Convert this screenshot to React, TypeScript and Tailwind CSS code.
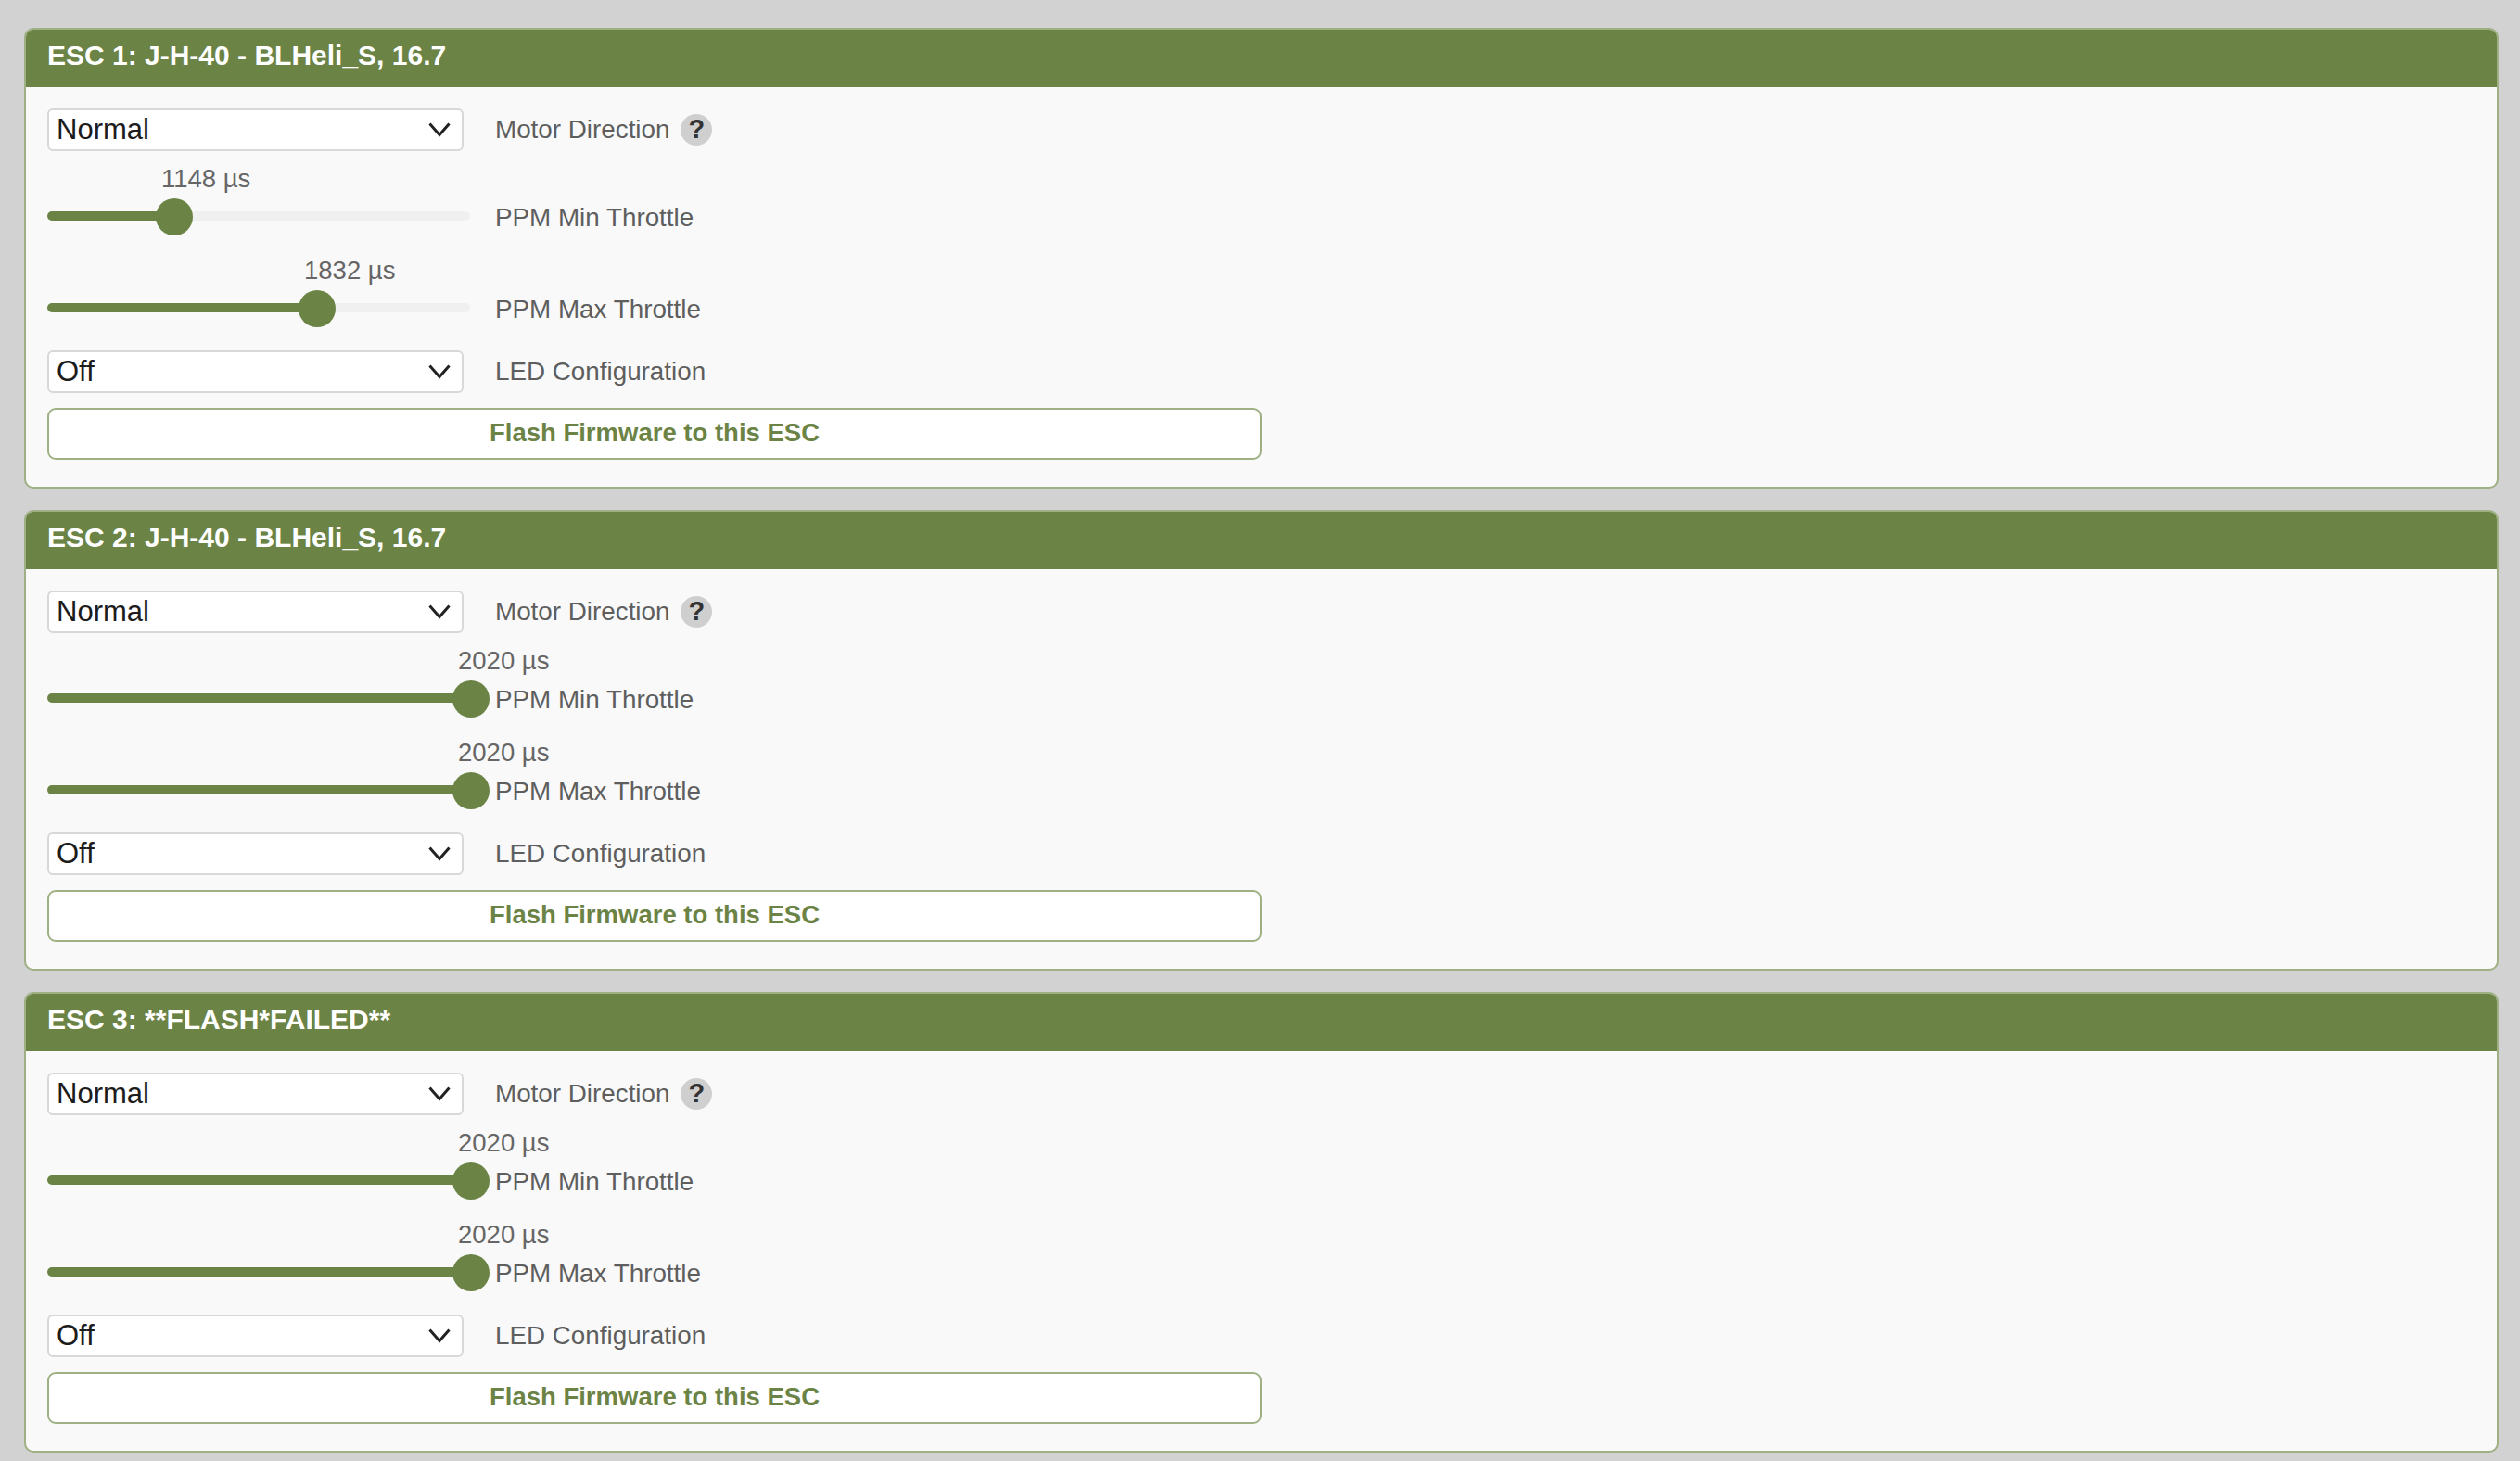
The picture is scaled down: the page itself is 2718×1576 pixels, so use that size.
import React from 'react';

interface EscProps {
  title: string;
  minValue: number;
  maxValue: number;
  minPct: number;
  maxPct: number;
}

const Chevron = () => (
  <svg className="absolute right-[14px] top-[15px] pointer-events-none" width="24" height="16" viewBox="0 0 24 16" fill="none">
    <path d="M1.5 1.5 L12 13.5 L22.5 1.5" stroke="#222222" strokeWidth="3" />
  </svg>
);

const SelectRow: React.FC<{ value: string; label: string; help?: boolean }> = ({ value, label, help }) => (
  <div className="flex items-center h-[46px]">
    <div className="relative w-[449px] h-[46px] shrink-0">
      <select
        defaultValue={value}
        className="w-full h-full appearance-none bg-white border-2 border-[#d8d8d8] rounded-[6px] pl-[8px] pb-[1px] text-[31px] leading-none text-[#1c1c1c] outline-none"
      >
        <option>{value}</option>
      </select>
      <Chevron />
    </div>
    <span className="ml-[34px] text-[27.8px] text-[#5e5e5e]">{label}</span>
    {help && (
      <span className="ml-[12px] w-[34px] h-[34px] rounded-full bg-[#cfcfcf] flex items-center justify-center text-[29px] font-bold text-[#333333]">
        ?
      </span>
    )}
  </div>
);

const SliderRow: React.FC<{ value: number; pct: number; label: string }> = ({ value, pct, label }) => (
  <div className="flex h-[99px]">
    <div className="w-[456px] shrink-0 relative">
      <div className="absolute top-[10px] left-0 right-0 h-[30px]">
        <span
          className="absolute top-0 whitespace-nowrap text-[27.5px] leading-[30px] text-[#666666]"
          style={{ left: `calc(${pct}% - 13px)` }}
        >
          {value} µs
        </span>
      </div>
      <div className="absolute top-[60px] left-0 right-0 h-[10px] rounded-full bg-[#f0f0f0]">
        <div className="h-full rounded-full bg-[#6b8345]" style={{ width: `${pct}%` }} />
        <div
          className="absolute top-[-14px] w-[40px] h-[40px] -ml-[19px] rounded-full bg-[#6b8345]"
          style={{ left: `${pct}%` }}
        />
      </div>
    </div>
    <span className="ml-[27px] mt-[51px] h-[32px] leading-[32px] text-[27.8px] text-[#5e5e5e]">{label}</span>
  </div>
);

const EscCard: React.FC<EscProps> = ({ title, minValue, maxValue, minPct, maxPct }) => (
  <div className="h-[497px] rounded-[10px] border-2 border-[#9fb184] bg-[#f9f9f9] overflow-hidden">
    <div className="h-[62px] bg-[#6b8345] pl-[23px] flex items-center text-[30px] font-bold text-white pb-[8px]">
      {title}
    </div>
    <div className="px-[23px] pt-[23px]">
      <SelectRow value="Normal" label="Motor Direction" help />
      <div className="mt-[5px]">
        <SliderRow value={minValue} pct={minPct} label="PPM Min Throttle" />
        <SliderRow value={maxValue} pct={maxPct} label="PPM Max Throttle" />
      </div>
      <div className="mt-[12px]">
        <SelectRow value="Off" label="LED Configuration" />
      </div>
      <button className="mt-[16px] w-[1310px] h-[56px] rounded-[9px] border-2 border-[#9fb184] bg-white text-[27.5px] font-bold text-[#6b8345] pb-[2px]">
        Flash Firmware to this ESC
      </button>
    </div>
  </div>
);

const App: React.FC = () => (
  <div className="min-h-screen bg-[#d2d2d2] pt-[30px] pl-[26px] pr-[23px] flex flex-col gap-[23px] font-['Liberation_Sans',Arial,sans-serif]">
    <EscCard title="ESC 1: J-H-40 - BLHeli_S, 16.7" minValue={1148} maxValue={1832} minPct={29.8} maxPct={63.6} />
    <EscCard title="ESC 2: J-H-40 - BLHeli_S, 16.7" minValue={2020} maxValue={2020} minPct={100} maxPct={100} />
    <EscCard title="ESC 3: **FLASH*FAILED**" minValue={2020} maxValue={2020} minPct={100} maxPct={100} />
  </div>
);

export default App;
